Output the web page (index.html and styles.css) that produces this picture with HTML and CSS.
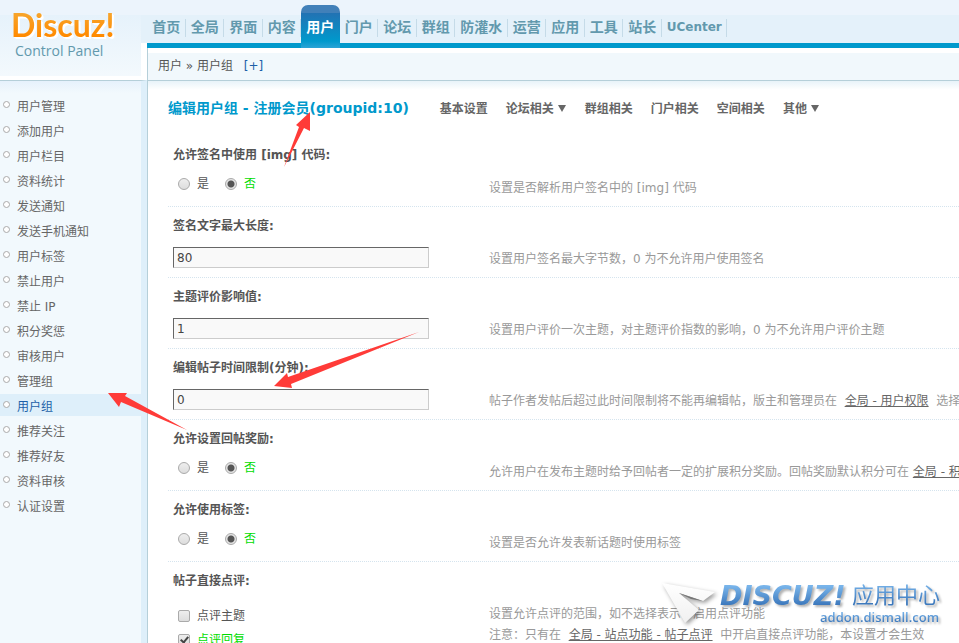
FILE: index.html
```html
<!DOCTYPE html>
<html lang="zh-CN">
<head>
    <meta charset="UTF-8">
    <meta name="viewport" content="width=device-width, initial-scale=1.0">
    <title>Discuz! Control Panel</title>
    <link rel="stylesheet" href="styles.css">
</head>
<body>

<div class="frame">
    <header class="logo">
        <svg class="logo-mark" width="112" height="34" viewBox="0 0 112 34">
            <defs>
                <linearGradient id="orange" x1="0" y1="0" x2="0" y2="1">
                    <stop offset="0.2" stop-color="#f7a52c"/>
                    <stop offset="0.8" stop-color="#ff8a00"/>
                </linearGradient>
            </defs>
            <text class="logo-text" x="0" y="29" fill="url(#orange)">Discuz!</text>
        </svg>
        <span class="logo-sub">Control Panel</span>
    </header>

    <div class="topbar">
        <nav class="mainnav">
            <div class="menu">
                <a href="#">首页</a>
                <a href="#">全局</a>
                <a href="#">界面</a>
                <a href="#">内容</a>
                <a href="#" class="active">用户</a>
                <a href="#">门户</a>
                <a href="#">论坛</a>
                <a href="#">群组</a>
                <a href="#">防灌水</a>
                <a href="#">运营</a>
                <a href="#">应用</a>
                <a href="#">工具</a>
                <a href="#">站长</a>
                <a href="#" class="latin">UCenter</a>
            </div>
        </nav>
        <div class="crumbs">用户 » 用户组 <a href="#">[+]</a></div>
    </div>

    <aside class="sidebar">
        <ul>
            <li><a href="#">用户管理</a></li>
            <li><a href="#">添加用户</a></li>
            <li><a href="#">用户栏目</a></li>
            <li><a href="#">资料统计</a></li>
            <li><a href="#">发送通知</a></li>
            <li><a href="#">发送手机通知</a></li>
            <li><a href="#">用户标签</a></li>
            <li><a href="#">禁止用户</a></li>
            <li><a href="#">禁止 IP</a></li>
            <li><a href="#">积分奖惩</a></li>
            <li><a href="#">审核用户</a></li>
            <li><a href="#">管理组</a></li>
            <li><a href="#" class="active">用户组</a></li>
            <li><a href="#">推荐关注</a></li>
            <li><a href="#">推荐好友</a></li>
            <li><a href="#">资料审核</a></li>
            <li><a href="#">认证设置</a></li>
        </ul>
    </aside>

    <main class="content">
        <div class="titlebar">
            <h3>编辑用户组 - 注册会员(groupid:10)</h3>
            <ul class="tabs">
                <li><a href="#">基本设置</a></li>
                <li><a href="#" class="drop">论坛相关</a></li>
                <li><a href="#">群组相关</a></li>
                <li><a href="#">门户相关</a></li>
                <li><a href="#">空间相关</a></li>
                <li><a href="#" class="drop">其他</a></li>
            </ul>
        </div>

        <form>
            <div class="row" role="group" aria-labelledby="l_img">
                <span class="name" id="l_img">允许签名中使用 [img] 代码:</span>
                <div class="radios">
                    <label><input type="radio" name="sigimg" value="1">是</label>
                    <label><input type="radio" name="sigimg" value="0" checked>否</label>
                </div>
                <p class="tips">设置是否解析用户签名中的 [img] 代码</p>
            </div>
            <div class="row">
                <label class="name" for="sigsize">签名文字最大长度:</label>
                <input class="txt" type="text" id="sigsize" value="80">
                <p class="tips">设置用户签名最大字节数，0 为不允许用户使用签名</p>
            </div>
            <div class="row">
                <label class="name" for="raterange">主题评价影响值:</label>
                <input class="txt" type="text" id="raterange" value="1">
                <p class="tips">设置用户评价一次主题，对主题评价指数的影响，0 为不允许用户评价主题</p>
            </div>
            <div class="row">
                <label class="name" for="edittime">编辑帖子时间限制(分钟):</label>
                <input class="txt" type="text" id="edittime" value="0">
                <p class="tips">帖子作者发帖后超过此时间限制将不能再编辑帖，版主和管理员在 &nbsp;<a href="#">全局 - 用户权限</a>&nbsp; 选择</p>
            </div>
            <div class="row" role="group" aria-labelledby="l_reward">
                <span class="name" id="l_reward">允许设置回帖奖励:</span>
                <div class="radios">
                    <label><input type="radio" name="reward" value="1">是</label>
                    <label><input type="radio" name="reward" value="0" checked>否</label>
                </div>
                <p class="tips">允许用户在发布主题时给予回帖者一定的扩展积分奖励。回帖奖励默认积分可在 <a href="#">全局 - 积分</a></p>
            </div>
            <div class="row" role="group" aria-labelledby="l_tag">
                <span class="name" id="l_tag">允许使用标签:</span>
                <div class="radios">
                    <label><input type="radio" name="tag" value="1">是</label>
                    <label><input type="radio" name="tag" value="0" checked>否</label>
                </div>
                <p class="tips">设置是否允许发表新话题时使用标签</p>
            </div>
            <div class="row" role="group" aria-labelledby="l_comment">
                <span class="name" id="l_comment">帖子直接点评:</span>
                <div class="checks">
                    <label><input type="checkbox">点评主题</label>
                    <label><input type="checkbox" checked>点评回复</label>
                </div>
                <p class="tips">设置允许点评的范围，如不选择表示不启用点评功能<br>注意：只有在 &nbsp;<a href="#">全局 - 站点功能 - 帖子点评</a>&nbsp; 中开启直接点评功能，本设置才会生效</p>
            </div>
        </form>
    </main>
</div>

<!-- red pointer arrows -->
<svg class="arrows" width="430" height="440" viewBox="0 0 430 440">
    <path d="M310 112 L296 125 L299 127 L284 167 L304 128 L310 131 Z"/>
    <path d="M274 386 L287 373 L288 377 L419 332 L291 384 L292 388 Z"/>
    <path d="M108 393 L127 393 L125 396 L187 430 L121 402 L119 407 Z"/>
</svg>

<!-- add-on center mark -->
<svg class="watermark" width="300" height="70" viewBox="0 0 300 70">
    <defs>
        <linearGradient id="blue" x1="0" y1="0" x2="0" y2="1">
            <stop offset="0.2" stop-color="#78b4ea"/>
            <stop offset="0.8" stop-color="#3d79bd"/>
        </linearGradient>
        <linearGradient id="plane" x1="0" y1="0" x2="0" y2="1">
            <stop offset="0" stop-color="#ffffff"/>
            <stop offset="1" stop-color="#f0f0f0"/>
        </linearGradient>
    </defs>
    <g class="plane">
        <path d="M3 10 L56 19 L44 28 L20 20 L40 37 L26 50 Z" fill="url(#plane)"/>
        <path d="M20 20 L44 28 L32 26 Z" fill="#777"/>
    </g>
    <g class="shade" fill="url(#blue)">
        <text class="wm-name" x="61" y="32">DISCUZ!</text>
        <text class="wm-cn" x="193" y="30">应用中心</text>
        <text class="wm-url" x="161" y="49">addon.dismall.com</text>
    </g>
</svg>

</body>
</html>
```
FILE: styles.css
```css
* {
    box-sizing: border-box;
}

body {
    margin: 0;
    font-family: "DejaVu Sans", "Noto Sans CJK SC", sans-serif;
    font-size: 12px;
    line-height: 16px;
    color: #555;
    background-color: #fff;
    position: relative;
    height: 100vh;
    overflow: hidden;
}

a {
    color: #666;
    text-decoration: none;
}

ul {
    list-style: none;
    margin: 0;
    padding: 0;
}

.frame {
    display: grid;
    grid-template-columns: 147px minmax(0, 1fr);
    grid-template-rows: 80px 1fr;
    min-height: 100vh;
    background: linear-gradient(#ecf4fc 15px, #e4f1fa 15px, #e4f1fa 43px, #fff 43px);
}

/* Header */
.logo {
    margin: 0 6px 4px 0;
    padding: 8px 0 0 11px;
    display: flex;
    flex-direction: column;
    background: linear-gradient(#ecf4fc 15px, #e6f2fb 15px, #f3f9fd);
}

.logo-mark {
    overflow: visible;
    filter: drop-shadow(1px 1px 0 #fff) drop-shadow(1px 1px 0 #fff);
}

.logo-text {
    font: bold 32px Lato, sans-serif;
}

.logo-sub {
    padding-left: 4px;
    font: 14px/18px "Open Sans", sans-serif;
    color: #6299ad;
}

.topbar {
    border-left: 1px solid #b5cfd9;
    border-image: linear-gradient(transparent 43px, #b5cfd9 43px) 1;
    border-width: 0 0 0 1px;
    display: flex;
    flex-direction: column;
}

.mainnav {
    height: 48px;
    padding-top: 5px;
    margin-left: -1px;
    background: linear-gradient(#09c, #09c) bottom / 100% 5px no-repeat;
}

.menu {
    display: flex;
    max-width: 580px;
}

.menu a {
    flex: 1 0 auto;
    height: 38px;
    padding: 12px 5px 0;
    font-size: 14px;
    font-weight: bold;
    line-height: 20px;
    text-align: center;
    white-space: nowrap;
    color: #6299ad;
    background: linear-gradient(#c5dbe8, #c5dbe8) right 14px / 1px 18px no-repeat;
}

.menu a.latin {
    font-size: 12px;
}

.menu a.active {
    height: 43px;
    color: #fff;
    border-radius: 7px 7px 0 0;
    background: linear-gradient(#4180b9 8px, #2272b3 8px, #09c 36px, #2ba4d6);
}

.crumbs {
    flex: 1;
    margin: 5px 0 2px;
    padding-left: 10px;
    line-height: 27px;
    background-color: #f1f8fc;
}

.crumbs a {
    margin-left: 7px;
    color: #1d5fa8;
}

/* Left menu */
.sidebar {
    border-top: 1px solid #b5cfd9;
    border-right: 6px solid #deeffa;
    background: linear-gradient(#e6f1fc, #f2f9fd 12px);
    padding-top: 13px;
}

.sidebar li {
    height: 25px;
}

.sidebar a {
    display: flex;
    align-items: center;
    height: 22px;
    padding-top: 3px;
}

.sidebar a::before {
    content: "";
    width: 5px;
    height: 5px;
    margin: 0 7px 4px 3px;
    border: 1px solid #aaa;
    border-radius: 50%;
    background-color: #fff;
}

.sidebar a.active {
    color: #1d5fa8;
    background-color: #deeffa;
}

/* Settings */
.content {
    border-top: 1px solid #b5cfd9;
    border-left: 1px solid #b5cfd9;
    padding: 17px 0 0 20px;
    background: linear-gradient(#e8f3f9, #fff 9px);
}

.titlebar {
    display: flex;
    align-items: center;
    gap: 31px;
    height: 20px;
    margin-bottom: 18px;
}

h3 {
    margin: 0;
    font-size: 14px;
    line-height: 20px;
    color: #09c;
    white-space: nowrap;
}

.tabs {
    display: flex;
    gap: 18px;
    padding-top: 1px;
    font-weight: bold;
    white-space: nowrap;
}

.drop::after {
    content: "";
    display: inline-block;
    margin: 0 1px 1px 4px;
    border: solid transparent;
    border-width: 7px 4px 0;
    border-top-color: #666;
}

.row {
    display: grid;
    grid-template-columns: 256px minmax(0, 1fr);
    column-gap: 60px;
    row-gap: 13px;
    padding: 11px 0 9px 5px;
    border-bottom: 1px dotted #d5e4ee;
}

.name {
    grid-column: 1 / -1;
    font-weight: bold;
}

.txt {
    width: 100%;
    height: 21px;
    padding: 0 3px;
    border: 1px solid;
    border-color: #666 #ccc #ccc #666;
    background-color: #f9f9f9;
    font: inherit;
    color: #444;
}

.tips {
    margin: 2px 0 -2px;
    line-height: 21px;
    color: #999;
    white-space: nowrap;
}

.tips a {
    color: #666;
    text-decoration: underline;
}

.radios,
.checks {
    display: flex;
    padding-left: 5px;
}

.radios {
    gap: 16px;
}

.checks {
    flex-direction: column;
    padding-top: 2px;
    line-height: 24px;
}

.radios label,
.checks label {
    display: flex;
    align-items: center;
}

.radios label {
    height: 16px;
}

label:has(input:checked) {
    color: #0d0;
}

.radios input,
.checks input {
    appearance: none;
    flex: none;
    width: 12px;
    height: 12px;
    margin: 0 7px 0 0;
    border: 1px solid #aaa;
    background: linear-gradient(#eee, #ddd);
}

.radios input {
    border-radius: 50%;
}

.radios input:checked {
    background: radial-gradient(circle, #555 3px, #e4e4e4 4px);
}

.checks input {
    border-radius: 2px;
}

.checks input:checked::before {
    content: "";
    display: block;
    width: 3px;
    height: 6px;
    margin-left: 3px;
    border: solid #444;
    border-width: 0 2px 2px 0;
    transform: rotate(40deg);
}

/* Overlays */
.arrows,
.watermark {
    position: absolute;
    pointer-events: none;
}

.arrows {
    top: 0;
    left: 0;
    fill: #ff3b38;
}

.watermark {
    right: 0;
    bottom: 0;
}

.plane {
    filter: drop-shadow(2px 2px 2px rgba(0, 0, 0, 0.4));
}

.shade {
    filter: drop-shadow(2px 2px 1px rgba(0, 0, 0, 0.3));
}

.wm-name {
    font: italic bold 27px "DejaVu Sans", sans-serif;
}

.wm-cn {
    font: 22px "Noto Sans CJK SC", sans-serif;
}

.wm-url {
    font: 600 13px "Open Sans", sans-serif;
}
```
